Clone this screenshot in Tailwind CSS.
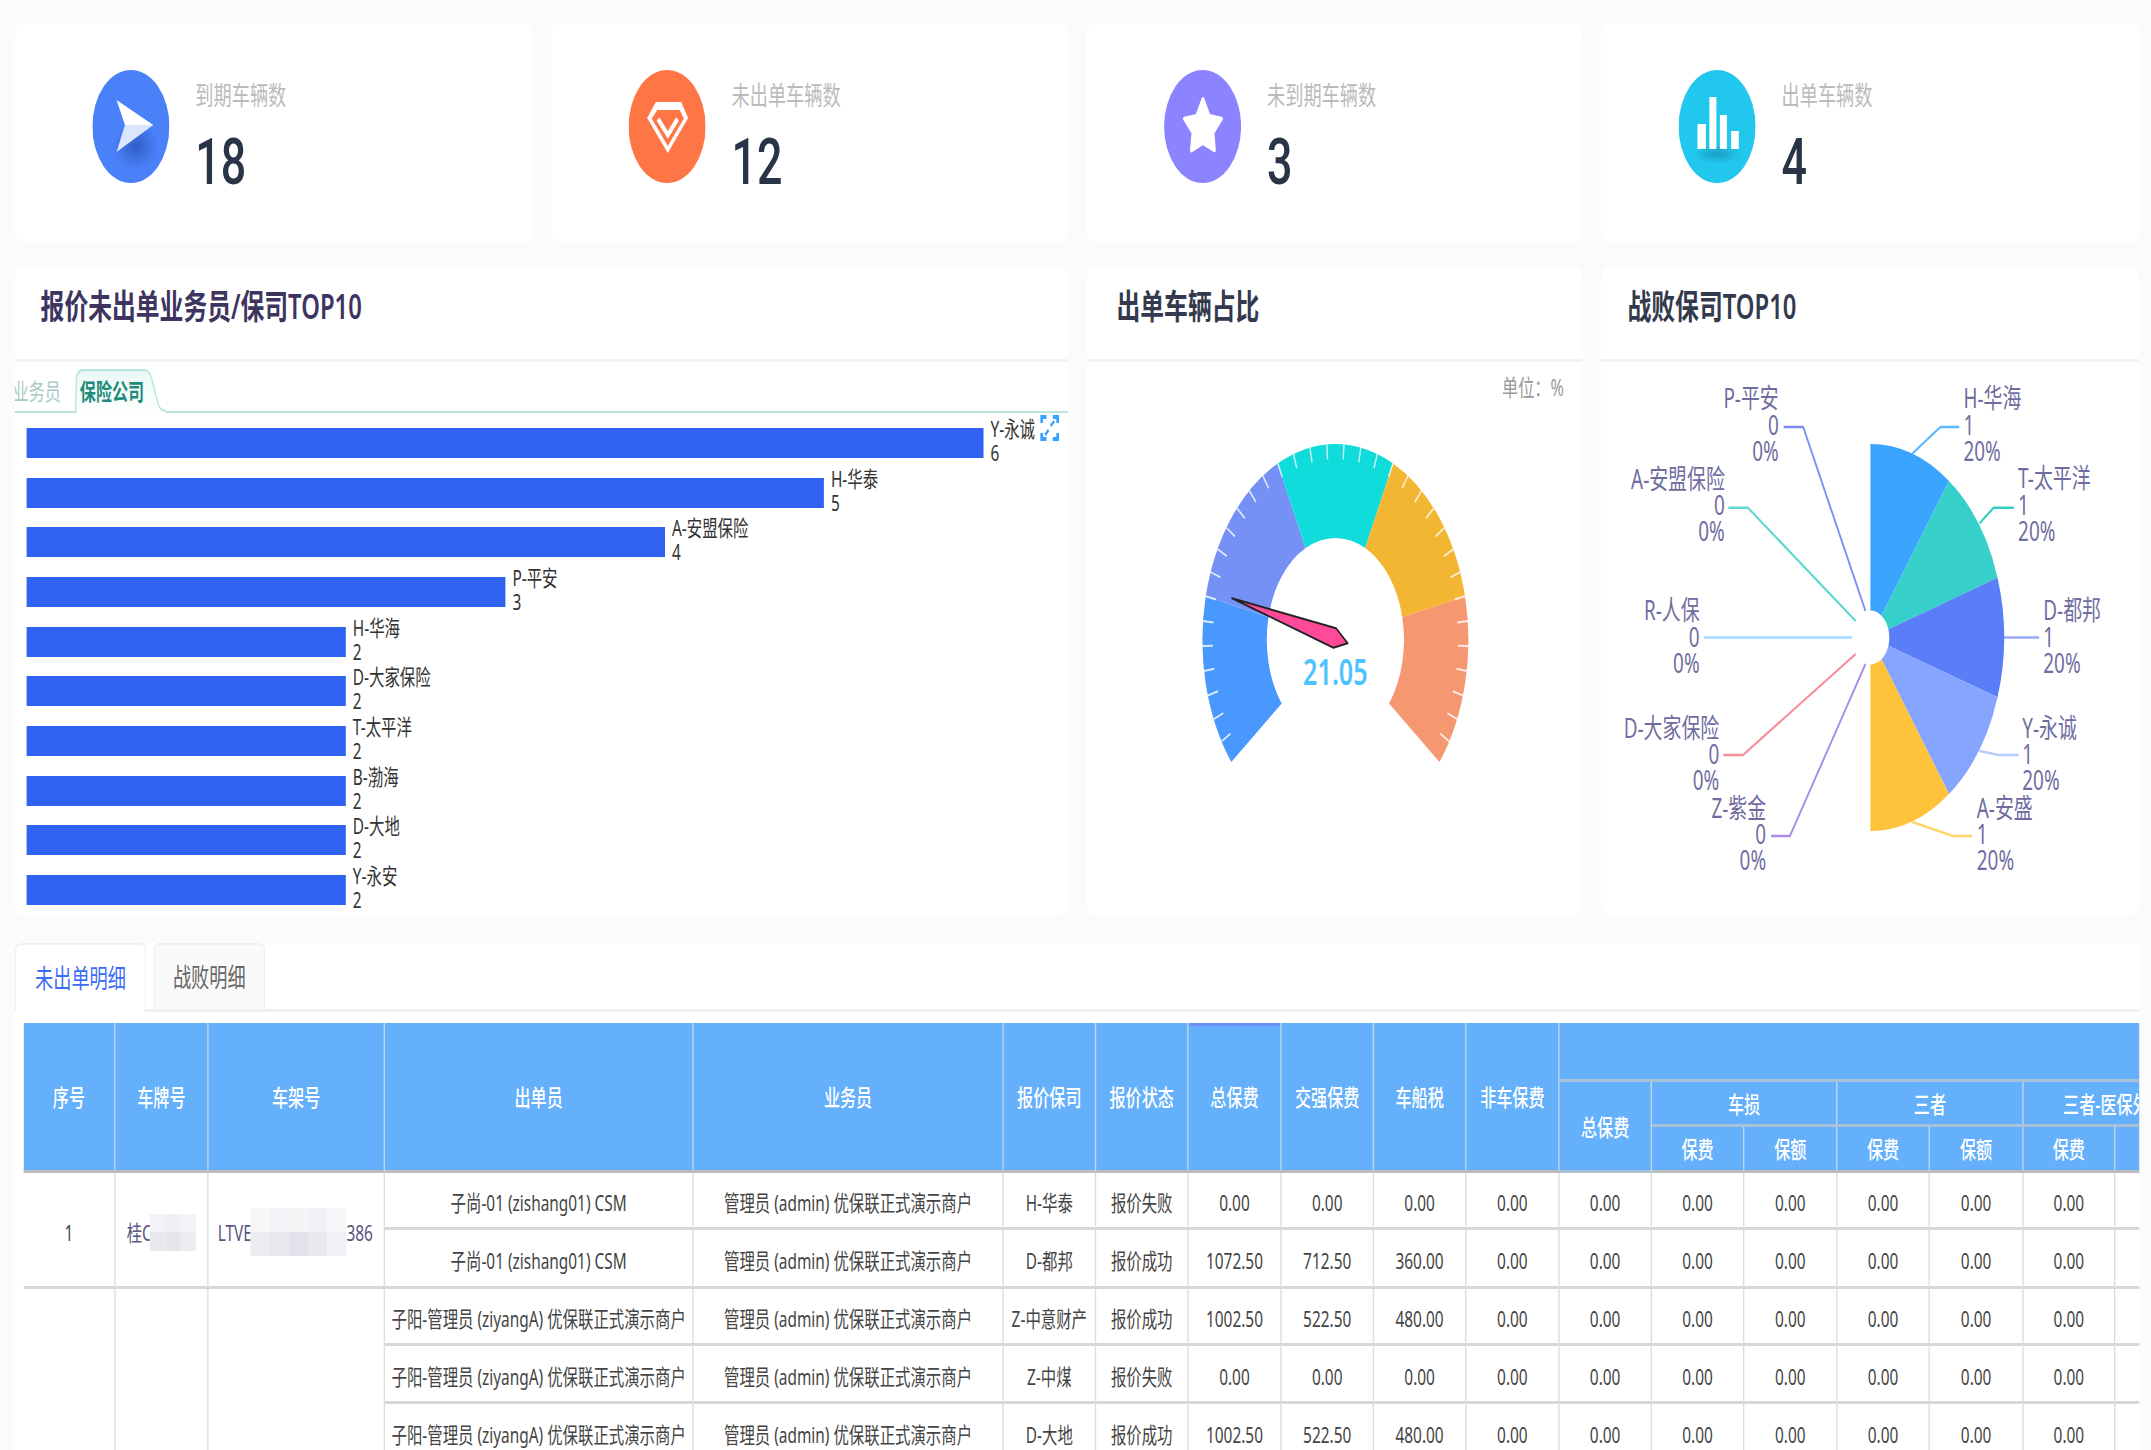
<!DOCTYPE html>
<html lang="zh-CN">
<head>
    <meta charset="UTF-8">
    <title>出单统计</title>
    <script src="https://cdn.jsdelivr.net/npm/@tailwindcss/browser@4"></script>
</head>
<body class="w-[2151px] h-[1450px] overflow-hidden bg-[#fbfbfb]">
<!-- the whole board is drawn wide, then squeezed horizontally like the source -->
<div class="w-[3073px] h-[1450px] origin-top-left scale-x-[0.7] pl-[21px] pt-[23px] [font-family:'Noto_Sans','Noto_Sans_CJK_SC',sans-serif] text-[23px] text-[#444]">

    <!-- stat cards -->
    <div class="grid grid-cols-[740px_739px_709px_769px] gap-x-[26px] w-[3035px]">
        <div class="h-[219px] bg-white rounded-xl flex items-start pl-[111px] pt-[47px] gap-[37px]">
            <svg class="w-[110px] h-[113px] shrink-0" viewBox="0 0 110 113">
                <defs>
                    <radialGradient id="arrowShade" cx="0.5" cy="0.5" r="0.5">
                        <stop offset="0" stop-color="#2a56b8" stop-opacity="0.8"/>
                        <stop offset="1" stop-color="#2a56b8" stop-opacity="0"/>
                    </radialGradient>
                </defs>
                <ellipse cx="55" cy="56.5" rx="55" ry="56.5" fill="#4a80f8"/>
                <ellipse cx="62" cy="76" rx="32" ry="24" fill="url(#arrowShade)"/>
                <path d="M34.500 30 L87 55 L46.500 55 Z" fill="#fff"/>
                <path d="M46.500 55 L87 55 L34.500 82 Z" fill="#dbe5fc"/>
            </svg>
            <div>
                <div class="text-[26px] leading-[30px] mt-[10px] text-[#bbb]">到期车辆数</div>
                <div class="text-[64px] leading-[64px] mt-[21px] font-medium text-[#2a3447] [font-family:Roboto,sans-serif]">18</div>
            </div>
        </div>
        <div class="h-[219px] bg-white rounded-xl flex items-start pl-[111px] pt-[47px] gap-[37px]">
            <svg class="w-[110px] h-[113px] shrink-0" viewBox="0 0 110 113">
                <ellipse cx="55" cy="56.5" rx="55" ry="56.5" fill="#ff7646"/>
                <path d="M39 32 H75 L85 48 L56 83 L26.500 48 Z" fill="#fff"/>
                <path d="M41 40 H73 L79 48.500 L56 76 L33 48.500 Z" fill="#ff7646"/>
                <path d="M42 49 L56 65 L70 49" fill="none" stroke="#fff" stroke-width="5"/>
            </svg>
            <div>
                <div class="text-[26px] leading-[30px] mt-[10px] text-[#bbb]">未出单车辆数</div>
                <div class="text-[64px] leading-[64px] mt-[21px] font-medium text-[#2a3447] [font-family:Roboto,sans-serif]">12</div>
            </div>
        </div>
        <div class="h-[219px] bg-white rounded-xl flex items-start pl-[111px] pt-[47px] gap-[37px]">
            <svg class="w-[110px] h-[113px] shrink-0" viewBox="0 0 110 113">
                <ellipse cx="55" cy="56.5" rx="55" ry="56.5" fill="#8b83ff"/>
                <path d="M55.5 29 L64.3 45.9 L82 48.7 L69.8 62.6 L72 80.3 L55.5 73 L39 80.3 L41.2 62.6 L29 48.7 L46.7 45.9 Z" fill="#fff" stroke="#fff" stroke-width="4" stroke-linejoin="round"/>
            </svg>
            <div>
                <div class="text-[26px] leading-[30px] mt-[10px] text-[#bbb]">未到期车辆数</div>
                <div class="text-[64px] leading-[64px] mt-[21px] font-medium text-[#2a3447] [font-family:Roboto,sans-serif]">3</div>
            </div>
        </div>
        <div class="h-[219px] bg-white rounded-xl flex items-start pl-[111px] pt-[47px] gap-[37px]">
            <svg class="w-[110px] h-[113px] shrink-0" viewBox="0 0 110 113">
                <defs>
                    <radialGradient id="barShade" cx="0.5" cy="0.5" r="0.5">
                        <stop offset="0" stop-color="#148fb3" stop-opacity="0.7"/>
                        <stop offset="1" stop-color="#148fb3" stop-opacity="0"/>
                    </radialGradient>
                </defs>
                <ellipse cx="55" cy="56.5" rx="55" ry="56.5" fill="#22c7ee"/>
                <ellipse cx="55" cy="84" rx="34" ry="10" fill="url(#barShade)"/>
                <rect x="27" y="54" width="12" height="25" fill="#fff"/>
                <rect x="44" y="27" width="10" height="52" fill="#fff"/>
                <rect x="59" y="45" width="10" height="34" fill="#fff"/>
                <rect x="75" y="61" width="11" height="18" fill="#fff"/>
            </svg>
            <div>
                <div class="text-[26px] leading-[30px] mt-[10px] text-[#bbb]">出单车辆数</div>
                <div class="text-[64px] leading-[64px] mt-[21px] font-medium text-[#2a3447] [font-family:Roboto,sans-serif]">4</div>
            </div>
        </div>
    </div>

    <!-- charts -->
    <div class="grid grid-cols-[740px_739px_709px_769px] gap-x-[26px] w-[3035px] mt-[25px]">
        <div class="col-span-2 h-[648px] bg-white rounded-xl overflow-hidden relative">
            <div class="h-[95px] pb-[14px] pl-[37px] flex items-center border-b-[3px] border-[#f3f3f3] text-[34px] font-semibold text-[#3d3560]">报价未出单业务员/保司TOP10</div>
            <div class="relative h-[51px] flex items-end border-b-2 border-[#b9e5dd]">
                <svg class="absolute left-[86px] bottom-[-2px] w-[130px] h-[44px]" viewBox="0 0 130 44">
                    <defs>
                        <linearGradient id="tabFill" x1="0" y1="0" x2="0" y2="1">
                            <stop offset="0" stop-color="#e9f8f5"/>
                            <stop offset="1" stop-color="#ffffff"/>
                        </linearGradient>
                    </defs>
                    <path d="M1 44 L2 10 Q3 1 12 1 L98 1 Q107 1 110 10 L118 33 Q121 42 130 42 L130 44 Z" fill="url(#tabFill)"/>
                    <path d="M1 44 L2 10 Q3 1 12 1 L98 1 Q107 1 110 10 L118 33 Q121 42 130 42" fill="none" stroke="#b9e5dd" stroke-width="2"/>
                </svg>
                <span class="relative leading-[30px] pb-[5px] -ml-[3px] text-[#a9c9c3]">业务员</span>
                <span class="relative leading-[30px] pb-[5px] ml-[27px] font-semibold text-[#1e8a78]">保险公司</span>
            </div>
            <svg class="absolute left-[1465px] top-[148px] w-[27px] h-[26px]" viewBox="0 0 27 26" fill="none" stroke="#3aa0ff" stroke-width="4">
                <path d="M2 8 V2 H9 M18 2 H25 V8 M25 18 V24 H18 M9 24 H2 V18"/>
                <path d="M20 6 L15 11 M7 20 L12 15" stroke-width="3"/>
            </svg>
            <div class="pl-[17px] pt-[15px] flex flex-col gap-[19.67px] [&_p]:pb-[6px] [&_p]:leading-[24px] [&_p]:text-[22px] [&_p]:text-[#333] [&_p]:whitespace-nowrap">
                <div class="h-[30px] flex items-center gap-[10px]"><div class="w-[1367px] h-[30px] bg-[#2f62f0]"></div><p>Y-永诚<br>6</p></div>
                <div class="h-[30px] flex items-center gap-[10px]"><div class="w-[1139px] h-[30px] bg-[#2f62f0]"></div><p>H-华泰<br>5</p></div>
                <div class="h-[30px] flex items-center gap-[10px]"><div class="w-[912px] h-[30px] bg-[#2f62f0]"></div><p>A-安盟保险<br>4</p></div>
                <div class="h-[30px] flex items-center gap-[10px]"><div class="w-[684px] h-[30px] bg-[#2f62f0]"></div><p>P-平安<br>3</p></div>
                <div class="h-[30px] flex items-center gap-[10px]"><div class="w-[456px] h-[30px] bg-[#2f62f0]"></div><p>H-华海<br>2</p></div>
                <div class="h-[30px] flex items-center gap-[10px]"><div class="w-[456px] h-[30px] bg-[#2f62f0]"></div><p>D-大家保险<br>2</p></div>
                <div class="h-[30px] flex items-center gap-[10px]"><div class="w-[456px] h-[30px] bg-[#2f62f0]"></div><p>T-太平洋<br>2</p></div>
                <div class="h-[30px] flex items-center gap-[10px]"><div class="w-[456px] h-[30px] bg-[#2f62f0]"></div><p>B-渤海<br>2</p></div>
                <div class="h-[30px] flex items-center gap-[10px]"><div class="w-[456px] h-[30px] bg-[#2f62f0]"></div><p>D-大地<br>2</p></div>
                <div class="h-[30px] flex items-center gap-[10px]"><div class="w-[456px] h-[30px] bg-[#2f62f0]"></div><p>Y-永安<br>2</p></div>
            </div>
        </div>

        <div class="h-[648px] bg-white rounded-xl overflow-hidden relative">
            <div class="h-[95px] pb-[14px] pl-[43px] flex items-center border-b-[3px] border-[#f3f3f3] text-[34px] font-semibold text-[#333a4d]">出单车辆占比</div>
            <div class="absolute right-[27px] top-[105px] leading-[30px] text-[#999]">单位：%</div>
            <svg id="gauge" class="block w-[709px] h-[553px]" viewBox="0 0 709 553">
                <g id="gaugeArcs"></g>
                <g id="gaugeTicks" stroke="#fff" stroke-width="2" stroke-opacity="0.8"></g>
                <path d="M208 236.300 L356.700 266.300 L373.300 281.300 L352.900 285.700 Z" fill="#ff4a9a" stroke="#222" stroke-width="2" stroke-linejoin="round"/>
                <text x="355.700" y="323" text-anchor="middle" class="text-[36px] font-semibold fill-[#4fc3ff]">21.05</text>
            </svg>
        </div>

        <div class="h-[648px] bg-white rounded-xl overflow-hidden">
            <div class="h-[95px] pb-[14px] pl-[38px] flex items-center border-b-[3px] border-[#f3f3f3] text-[34px] font-semibold text-[#333a4d]">战败保司TOP10</div>
            <svg class="block w-[769px] h-[553px]" viewBox="0 0 769 553">
                <g id="pieSlices"></g>
                <g fill="none" stroke-width="2.500">
                    <polyline points="512,65 485,65 445,91.500" stroke="#5bb8ff"/>
                    <polyline points="590,145.700 561,145.700 541,161.200" stroke="#36cfc9"/>
                    <polyline points="626,275.600 576,275.600" stroke="#9aa8f5"/>
                    <polyline points="597,393 568,393 541,389" stroke="#b8cbff"/>
                    <polyline points="530,474 503,474 445,460" stroke="#ffd36b"/>
                    <polyline points="261,65 289,65 378,249" stroke="#7c8cf0"/>
                    <polyline points="182,145.700 210,145.700 364,259" stroke="#5fd9cf"/>
                    <polyline points="147,275.600 359,275.600" stroke="#a5d8ff"/>
                    <polyline points="175,393 203,393 364,292" stroke="#f78f9a"/>
                    <polyline points="243,474 270,474 378,302" stroke="#a98bea"/>
                </g>
                <g class="text-[27px] fill-[#6f6d9f]">
                    <text x="518" y="46">H-华海<tspan x="518" dy="27">1</tspan><tspan x="518" dy="26">20%</tspan></text>
                    <text x="596" y="126">T-太平洋<tspan x="596" dy="27">1</tspan><tspan x="596" dy="26">20%</tspan></text>
                    <text x="632" y="258">D-都邦<tspan x="632" dy="27">1</tspan><tspan x="632" dy="26">20%</tspan></text>
                    <text x="602" y="376">Y-永诚<tspan x="602" dy="26">1</tspan><tspan x="602" dy="26">20%</tspan></text>
                    <text x="537" y="456">A-安盛<tspan x="537" dy="26">1</tspan><tspan x="537" dy="26">20%</tspan></text>
                    <text x="254" y="46" text-anchor="end">P-平安<tspan x="254" dy="27">0</tspan><tspan x="254" dy="26">0%</tspan></text>
                    <text x="177" y="127" text-anchor="end">A-安盟保险<tspan x="177" dy="26">0</tspan><tspan x="177" dy="26">0%</tspan></text>
                    <text x="141" y="258" text-anchor="end">R-人保<tspan x="141" dy="27">0</tspan><tspan x="141" dy="26">0%</tspan></text>
                    <text x="169" y="376" text-anchor="end">D-大家保险<tspan x="169" dy="26">0</tspan><tspan x="169" dy="26">0%</tspan></text>
                    <text x="236" y="456" text-anchor="end">Z-紫金<tspan x="236" dy="26">0</tspan><tspan x="236" dy="26">0%</tspan></text>
                </g>
            </svg>
        </div>
    </div>

    <!-- detail table -->
    <div class="w-[3035px] mt-[28px] h-[540px] bg-white overflow-hidden">
        <div class="h-[69px] flex items-end border-b-[3px] border-[#f0f0f0]">
            <div class="w-[188px] h-[69px] -mb-[3px] bg-white border-2 border-b-0 border-[#f0f0f0] rounded-t-lg flex items-center justify-center text-[26px] text-[#3b6cf6]">未出单明细</div>
            <div class="w-[160px] h-[66px] ml-[10px] bg-[#fafafa] border-2 border-b-0 border-[#f0f0f0] rounded-t-lg flex items-center justify-center text-[26px] text-[#666]">战败明细</div>
        </div>
        <table class="ml-[13px] mt-[11px] table-fixed border-separate border-spacing-0 w-[3120px] text-center whitespace-nowrap [&_th]:pt-[2px] [&_th]:font-medium [&_th]:text-white [&_th]:bg-[#64b0fb] [&_th]:border-r-2 [&_th]:border-b-[3px] [&_th]:border-r-[#c6d6e4] [&_th]:border-b-[#a9c0d6] [&_td]:pt-[5px] [&_td]:text-[22px] [&_td]:border-r-2 [&_td]:border-b-[3px] [&_td]:border-r-[#dedede] [&_td]:border-b-[#d8d8d8]">
            <colgroup>
                <col class="w-[131px]"><col class="w-[133px]"><col class="w-[252px]"><col class="w-[441px]"><col class="w-[443px]"><col class="w-[132px]"><col class="w-[132px]"><col class="w-[133px]"><col class="w-[132px]"><col class="w-[132px]"><col class="w-[133px]"><col class="w-[132px]"><col class="w-[132px]"><col class="w-[133px]"><col class="w-[132px]"><col class="w-[134px]"><col class="w-[131px]"><col class="w-[132px]">
            </colgroup>
            <thead class="[&_th[rowspan='3']]:border-b-[#bdbdbd]">
                <tr class="h-[59px]">
                    <th rowspan="3">序号</th>
                    <th rowspan="3">车牌号</th>
                    <th rowspan="3">车架号</th>
                    <th rowspan="3">出单员</th>
                    <th rowspan="3">业务员</th>
                    <th rowspan="3">报价保司</th>
                    <th rowspan="3">报价状态</th>
                    <th rowspan="3" class="shadow-[inset_0_3px_0_#6c8ff5]">总保费</th>
                    <th rowspan="3">交强保费</th>
                    <th rowspan="3">车船税</th>
                    <th rowspan="3">非车保费</th>
                    <th colspan="7"></th>
                </tr>
                <tr class="h-[45px]">
                    <th rowspan="2">总保费</th>
                    <th colspan="2">车损</th>
                    <th colspan="2">三者</th>
                    <th colspan="2"><span class="pr-[26px]">三者-医保外</span></th>
                </tr>
                <tr class="h-[46px] [&_th]:border-b-[#bdbdbd]">
                    <th>保费</th><th>保额</th><th>保费</th><th>保额</th><th>保费</th><th>保额</th>
                </tr>
            </thead>
            <tbody>
                <tr class="h-[57px]">
                    <td rowspan="2">1</td>
                    <td rowspan="2" class="text-[#5a5580]">
                        <div class="flex items-center pl-[16px]">
                            <span class="w-[33px] overflow-hidden">桂C</span>
                            <div class="w-[66px] h-[37px] grid grid-cols-3 grid-rows-2">
                                <div class="bg-[#f3f2f6]"></div><div class="bg-[#f0eff4]"></div><div class="bg-[#f5f5f7]"></div>
                                <div class="bg-[#e9e8ee]"></div><div class="bg-[#e6e5ec]"></div><div class="bg-[#ecebf0]"></div>
                            </div>
                        </div>
                    </td>
                    <td rowspan="2" class="text-[#5a5580]">
                        <div class="flex items-center pl-[13px]">
                            <span class="w-[47px] overflow-hidden">LTVE</span>
                            <div class="w-[137px] h-[48px] grid grid-cols-5 grid-rows-2">
                                <div class="bg-[#f6f6f8]"></div><div class="bg-[#f3f2f6]"></div><div class="bg-[#f5f5f7]"></div><div class="bg-[#f1f0f4]"></div><div class="bg-[#f7f7f9]"></div>
                                <div class="bg-[#ecebf0]"></div><div class="bg-[#e8e7ed]"></div><div class="bg-[#e3e2ea]"></div><div class="bg-[#e9e8ee]"></div><div class="bg-[#f2f1f5]"></div>
                            </div>
                            <span>386</span>
                        </div>
                    </td>
                    <td>子尚-01 (zishang01) CSM</td><td>管理员 (admin) 优保联正式演示商户</td><td>H-华泰</td><td>报价失败</td><td>0.00</td><td>0.00</td><td>0.00</td><td>0.00</td><td>0.00</td><td>0.00</td><td>0.00</td><td>0.00</td><td>0.00</td><td>0.00</td><td>0.00</td>
                </tr>
                <tr class="h-[59px]">
                    <td>子尚-01 (zishang01) CSM</td><td>管理员 (admin) 优保联正式演示商户</td><td>D-都邦</td><td>报价成功</td><td>1072.50</td><td>712.50</td><td>360.00</td><td>0.00</td><td>0.00</td><td>0.00</td><td>0.00</td><td>0.00</td><td>0.00</td><td>0.00</td><td>0.00</td>
                </tr>
                <tr class="h-[57px]">
                    <td rowspan="3"></td><td rowspan="3"></td><td rowspan="3"></td>
                    <td>子阳-管理员 (ziyangA) 优保联正式演示商户</td><td>管理员 (admin) 优保联正式演示商户</td><td>Z-中意财产</td><td>报价成功</td><td>1002.50</td><td>522.50</td><td>480.00</td><td>0.00</td><td>0.00</td><td>0.00</td><td>0.00</td><td>0.00</td><td>0.00</td><td>0.00</td><td>0.00</td>
                </tr>
                <tr class="h-[58px]">
                    <td>子阳-管理员 (ziyangA) 优保联正式演示商户</td><td>管理员 (admin) 优保联正式演示商户</td><td>Z-中煤</td><td>报价失败</td><td>0.00</td><td>0.00</td><td>0.00</td><td>0.00</td><td>0.00</td><td>0.00</td><td>0.00</td><td>0.00</td><td>0.00</td><td>0.00</td><td>0.00</td>
                </tr>
                <tr class="h-[58px]">
                    <td>子阳-管理员 (ziyangA) 优保联正式演示商户</td><td>管理员 (admin) 优保联正式演示商户</td><td>D-大地</td><td>报价成功</td><td>1002.50</td><td>522.50</td><td>480.00</td><td>0.00</td><td>0.00</td><td>0.00</td><td>0.00</td><td>0.00</td><td>0.00</td><td>0.00</td><td>0.00</td>
                </tr>
            </tbody>
        </table>
    </div>
</div>

<script>
    const SVG_NS = 'http://www.w3.org/2000/svg';

    // ring sector, angles in degrees counter-clockwise from +x
    function sector(cx, cy, rx, ry, irx, iry, from, to) {
        const pt = (a, x, y) => {
            const r = a * Math.PI / 180;
            return (cx + x * Math.cos(r)).toFixed(2) + ' ' + (cy - y * Math.sin(r)).toFixed(2);
        };
        return 'M' + pt(from, rx, ry) +
            ' A' + rx + ' ' + ry + ' 0 0 1 ' + pt(to, rx, ry) +
            ' L' + pt(to, irx, iry) +
            ' A' + irx + ' ' + iry + ' 0 0 0 ' + pt(from, irx, iry) + ' Z';
    }

    function addPath(parent, d, fill) {
        const p = document.createElementNS(SVG_NS, 'path');
        p.setAttribute('d', d);
        p.setAttribute('fill', fill);
        parent.appendChild(p);
    }

    // gauge: five bands of seven ticks each
    const gaugeColors = ['#4898fd', '#7591f5', '#0fdcdb', '#f2b632', '#f59872'];
    const arcs = document.getElementById('gaugeArcs');
    const ticks = document.getElementById('gaugeTicks');
    const gx = 355.7, gy = 278, grx = 190, gry = 196;
    const gStart = 218.5, gBand = 51.4;
    gaugeColors.forEach((c, i) => {
        addPath(arcs, sector(gx, gy, grx, gry, 98, 102, gStart - i * gBand, gStart - (i + 1) * gBand), c);
    });
    for (let i = 1; i < 35; i++) {
        const r = (gStart - i * gBand / 7) * Math.PI / 180;
        const line = document.createElementNS(SVG_NS, 'line');
        line.setAttribute('x1', gx + grx * Math.cos(r));
        line.setAttribute('y1', gy - gry * Math.sin(r));
        line.setAttribute('x2', gx + (grx - 15) * Math.cos(r));
        line.setAttribute('y2', gy - (gry - 15) * Math.sin(r));
        ticks.appendChild(line);
    }

    // pie: only the five non-zero insurers take a slice, half a turn in total
    const pieColors = ['#3ba4ff', '#36cfc9', '#5a7ef7', '#86a5ff', '#ffc23b'];
    const slices = document.getElementById('pieSlices');
    pieColors.forEach((c, i) => {
        addPath(slices, sector(385, 275.5, 191, 193.5, 27, 27, 90 - i * 36, 90 - (i + 1) * 36), c);
    });
</script>
</body>
</html>
